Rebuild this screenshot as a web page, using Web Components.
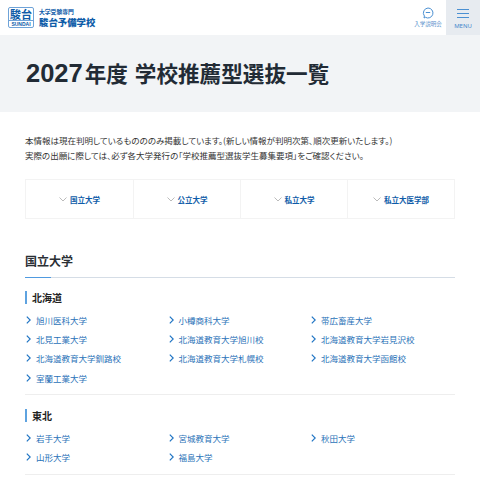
<!DOCTYPE html>
<html>
<head>
  <meta charset="utf-8" />
  <title>2027年度 学校推薦型選抜一覧</title>
  <style>
    html, body { height: 100%; }
    body {
      margin: 0;
      overflow: hidden;
      background: #fff;
      color: #222;
      font-family: "Noto Sans CJK JP", "Noto Sans", sans-serif;
      font-feature-settings: "palt";
    }
    .num { font-family: "Liberation Sans", sans-serif; }
  </style>
</head>
<body>
  <site-header></site-header>
  <page-title><span class="num">2027</span>年度 学校推薦型選抜一覧</page-title>
  <main-wrap>
    <intro-text>
      本情報は現在判明しているものののみ掲載しています。(新しい情報が判明次第、順次更新いたします。)<br>
      実際の出願に際しては、必ず各大学発行の「学校推薦型選抜学生募集要項」をご確認ください。
    </intro-text>
    <anchor-nav>
      <anchor-item>国立大学</anchor-item>
      <anchor-item>公立大学</anchor-item>
      <anchor-item>私立大学</anchor-item>
      <anchor-item>私立大医学部</anchor-item>
    </anchor-nav>
    <section-title>国立大学</section-title>
    <region-block name="北海道" items="旭川医科大学,小樽商科大学,帯広畜産大学,北見工業大学,北海道教育大学旭川校,北海道教育大学岩見沢校,北海道教育大学釧路校,北海道教育大学札幌校,北海道教育大学函館校,室蘭工業大学"></region-block>
    <region-block name="東北" items="岩手大学,宮城教育大学,秋田大学,山形大学,福島大学"></region-block>
  </main-wrap>

  <script>
    customElements.define('site-header', class extends HTMLElement {
      constructor() {
        super();
        this.attachShadow({ mode: 'open' });
        this.shadowRoot.innerHTML = `
        <style>
          :host {
            display: flex;
            align-items: stretch;
            height: 35px;
            padding-left: 8px;
            background: #fff;
          }
          .logo {
            display: flex;
            flex-direction: column;
            align-items: center;
            box-sizing: border-box;
            width: 26px;
            height: 21px;
            margin-top: 7px;
            border: 1px solid #6fa3d8;
            border-radius: 2px;
            color: #0e5ca8;
            overflow: hidden;
          }
          .logo b {
            flex: none;
            font-size: 11px;
            line-height: 12px;
            white-space: nowrap;
          }
          .logo span {
            flex: none;
            align-self: stretch;
            border-top: 1px solid #6fa3d8;
            font: bold 5px/6px "Liberation Sans", sans-serif;
            text-align: center;
          }
          .name {
            margin-left: 5px;
            margin-top: 7px;
            color: #0e5ca8;
            font-weight: 700;
          }
          .name small { display: block; font-size: 5.8px; line-height: 9px; }
          .name strong { display: block; font-size: 9.4px; line-height: 12px; }
          .info {
            margin-left: auto;
            width: 36px;
            display: flex;
            flex-direction: column;
            align-items: center;
            color: #5c93cc;
            font-size: 5.5px;
            line-height: 8px;
            padding-top: 7px;
            box-sizing: border-box;
          }
          .info svg { margin-bottom: 1px; }
          .menu {
            width: 34px;
            background: #e7ebf0;
            color: #3f87cc;
            display: flex;
            flex-direction: column;
            align-items: center;
            font: 6px/8px "Noto Sans", sans-serif;
            padding-top: 9px;
            box-sizing: border-box;
          }
          .menu i {
            display: block;
            width: 12px;
            height: 1px;
            margin-bottom: 3px;
            background: #4b90d2;
          }
          .menu span { margin-top: 1px; }
        </style>
        <div class="logo"><b>駿台</b><span>SUNDAI</span></div>
        <div class="name"><small>大学受験専門</small><strong>駿台予備学校</strong></div>
        <div class="info">
          <svg width="12" height="12" viewBox="0 0 12 12" fill="none" stroke="#4b90d2">
            <path d="M6 1a5 5 0 1 1-2.6 9.3L2 11l.4-2A5 5 0 0 1 6 1z"/>
            <path d="M3.8 5.5h4.4" stroke-width="1"/>
          </svg>
          <div>入学説明会</div>
        </div>
        <div class="menu"><i></i><i></i><i></i><span>MENU</span></div>`;
      }
    });

    customElements.define('page-title', class extends HTMLElement {
      constructor() {
        super();
        this.attachShadow({ mode: 'open' });
        this.shadowRoot.innerHTML = `
        <style>
          :host {
            display: block;
            padding: 0 25px;
            height: 77px;
            background: #f2f4f6;
            font-size: 21.6px;
            line-height: 76px;
            font-weight: 700;
            color: #222b35;
            white-space: nowrap;
            word-spacing: 2px;
          }
          ::slotted(.num) {
            font-size: 25.5px;
            margin: 0 2px 0 1px;
          }
        </style>
        <slot></slot>`;
      }
    });

    customElements.define('main-wrap', class extends HTMLElement {
      constructor() {
        super();
        this.attachShadow({ mode: 'open' });
        this.shadowRoot.innerHTML = `
        <style>
          :host { display: block; padding: 21px 25px 0; }
        </style>
        <slot></slot>`;
      }
    });

    customElements.define('intro-text', class extends HTMLElement {
      constructor() {
        super();
        this.attachShadow({ mode: 'open' });
        this.shadowRoot.innerHTML = `
        <style>
          :host {
            display: block;
            font-size: 8.5px;
            line-height: 15px;
            color: #333;
            white-space: nowrap;
          }
        </style>
        <slot></slot>`;
      }
    });

    customElements.define('anchor-nav', class extends HTMLElement {
      constructor() {
        super();
        this.attachShadow({ mode: 'open' });
        this.shadowRoot.innerHTML = `
        <style>
          :host {
            display: grid;
            grid-template-columns: repeat(4, 1fr);
            height: 40px;
            margin-top: 16px;
            border: 1px solid #f3f3f3;
            box-sizing: border-box;
          }
        </style>
        <slot></slot>`;
      }
    });

    customElements.define('anchor-item', class extends HTMLElement {
      constructor() {
        super();
        this.attachShadow({ mode: 'open' });
        this.shadowRoot.innerHTML = `
        <style>
          :host {
            display: flex;
            align-items: center;
            justify-content: center;
            gap: 3px;
            color: #0e5ca8;
            font-size: 7.5px;
            font-weight: 700;
            border-left: 1px solid #f3f3f3;
          }
          :host(:first-child) { border-left: 0; }
          svg { margin-top: 1px; }
        </style>
        <svg width="8" height="5" viewBox="0 0 8 5" fill="none" stroke="#bbb" stroke-width="1"><path d="M.5.5 4 4 7.5.5"/></svg>
        <span><slot></slot></span>`;
      }
    });

    customElements.define('section-title', class extends HTMLElement {
      constructor() {
        super();
        this.attachShadow({ mode: 'open' });
        this.shadowRoot.innerHTML = `
        <style>
          :host {
            display: block;
            position: relative;
            margin-top: 33px;
            padding-bottom: 7px;
            border-bottom: 1px solid #d5dde6;
            font-size: 12px;
            line-height: 18px;
            font-weight: 700;
            color: #2a2f35;
          }
          :host::after {
            content: '';
            position: absolute;
            left: 0;
            bottom: -1px;
            width: 26px;
            height: 1px;
            background: #4f9ae0;
          }
        </style>
        <slot></slot>`;
      }
    });

    customElements.define('region-block', class extends HTMLElement {
      constructor() {
        super();
        this.attachShadow({ mode: 'open' });
        const items = this.getAttribute('items').split(',');
        this.shadowRoot.innerHTML = `
        <style>
          :host {
            display: block;
            padding: 13px 0 7px;
            border-bottom: 1px solid #eee;
          }
          :host(:last-child) { padding-top: 14px; }
          h3 {
            margin: 0 0 6px;
            padding-left: 5px;
            border-left: 2px solid #5ea3e0;
            font-size: 10px;
            line-height: 13px;
            font-weight: 700;
            color: #222;
          }
          ul {
            display: grid;
            grid-template-columns: repeat(3, 142.5px);
            margin: 0;
            padding: 0;
            list-style: none;
          }
          li {
            display: flex;
            align-items: center;
            gap: 5px;
            height: 19.3px;
            color: #2a72b8;
            font-size: 8.5px;
            white-space: nowrap;
          }
          svg { flex: none; margin-left: 1px; }
        </style>
        <h3>${this.getAttribute('name')}</h3>
        <ul>${items.map(item => `<li><svg width="5" height="8" viewBox="0 0 5 8" fill="none" stroke="#1f74c4" stroke-width="1.2"><path d="M.8.6 4.2 4 .8 7.4"/></svg>${item}</li>`).join('')}</ul>`;
      }
    });
  </script>
</body>
</html>
